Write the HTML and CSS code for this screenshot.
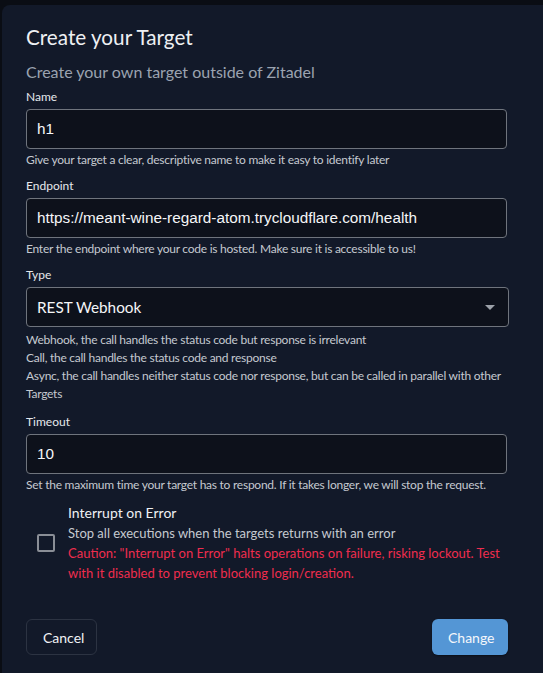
FILE: index.html
```html
<!DOCTYPE html>
<html lang="en">
<head>
<meta charset="utf-8">
<title>Create your Target</title>
<link rel="stylesheet" href="styles.css">
</head>
<body>
<div class="dialog">
  <h1 class="title">Create your Target</h1>
  <p class="subtitle">Create your own target outside of Zitadel</p>

  <div class="field">
    <label class="label">Name</label>
    <div class="input">h1</div>
    <p class="hint">Give your target a clear, descriptive name to make it easy to identify later</p>
  </div>

  <div class="field">
    <label class="label">Endpoint</label>
    <div class="input">https://meant-wine-regard-atom.trycloudflare.com/health</div>
    <p class="hint">Enter the endpoint where your code is hosted. Make sure it is accessible to us!</p>
  </div>

  <div class="field">
    <label class="label">Type</label>
    <div class="select">
      <span>REST Webhook</span>
      <span class="arrow"></span>
    </div>
    <p class="hint multi">Webhook, the call handles the status code but response is irrelevant<br>Call, the call handles the status code and response<br>Async, the call handles neither status code nor response, but can be called in parallel with other Targets</p>
  </div>

  <div class="field field-timeout">
    <label class="label">Timeout</label>
    <div class="input">10</div>
    <p class="hint">Set the maximum time your target has to respond. If it takes longer, we will stop the request.</p>
  </div>

  <div class="check-row">
    <div class="check-wrap"><span class="checkbox"></span></div>
    <div class="check-text">
      <div class="check-title">Interrupt on Error</div>
      <div class="check-desc">Stop all executions when the targets returns with an error</div>
      <div class="caution">Caution: "Interrupt on Error" halts operations on failure, risking lockout. Test with it disabled to prevent blocking login/creation.</div>
    </div>
  </div>

  <div class="actions">
    <button class="btn btn-cancel">Cancel</button>
    <button class="btn btn-primary">Change</button>
  </div>
</div>
</body>
</html>
```
FILE: styles.css
```css
html, body {
  margin: 0;
  padding: 0;
  background: #0a0d14;
  overflow: hidden;
}
body {
  font-family: Lato, "Liberation Sans", sans-serif;
  color: #e6e8ec;
  height: 673px;
}
.dialog {
  margin: 5px 0 0 2px;
  background: #121929;
  border-radius: 8px 0 0 0;
  padding: 20px 0 0 24px;
  width: 560px;
  height: 700px;
  box-sizing: border-box;
}
.title {
  margin: 0;
  font-size: 20.7px;
  font-weight: 400;
  line-height: 24px;
  color: #eef0f3;
}
.subtitle {
  margin: 13px 0 0;
  font-size: 16px;
  line-height: 20px;
  color: #9ba3b0;
}
.field {
  display: flex;
  flex-direction: column;
  width: 481px;
  margin-top: 10px;
}
.subtitle + .field { margin-top: 7px; }
.field-timeout { margin-top: 11px; }
.label {
  font-size: 12px;
  line-height: 16px;
  color: #e6e8ec;
  margin-bottom: 4px;
}
.input, .select {
  height: 40px;
  box-sizing: border-box;
  border: 1px solid #6f747d;
  border-radius: 4px;
  background: #0d111b;
  font-family: "Liberation Sans", Arial, sans-serif;
  font-size: 15.3px;
  color: #f5f6f8;
  padding: 0 10px;
  display: flex;
  align-items: center;
}
.select {
  font-family: Lato, sans-serif;
  justify-content: space-between;
  width: 483px;
  padding-right: 13px;
}
.arrow {
  width: 0;
  height: 0;
  border-left: 5px solid transparent;
  border-right: 5px solid transparent;
  border-top: 5px solid #9ca1a9;
}
.hint {
  margin: 3px 0 0;
  font-size: 12px;
  letter-spacing: -0.25px;
  line-height: 16px;
  color: #c5c9d0;
}
.hint.multi {
  line-height: 18px;
  margin-top: 4px;
}
.check-row {
  display: flex;
  align-items: center;
  margin-top: 10px;
}
.check-wrap {
  width: 42px;
  flex-shrink: 0;
  display: flex;
  padding-left: 11px;
  box-sizing: border-box;
}
.checkbox {
  width: 18px;
  height: 18px;
  box-sizing: border-box;
  border: 2px solid #8a8e96;
  border-radius: 2px;
}
.check-text {
  width: 445px;
  font-size: 14px;
  line-height: 20px;
}
.check-title { color: #eef0f3; }
.check-desc { color: #c5c9d0; font-size: 13px; }
.caution { color: #ef2d4e; font-size: 13px; }
.actions {
  display: flex;
  justify-content: space-between;
  width: 482px;
  margin-top: 36px;
}
.btn {
  font-family: Lato, sans-serif;
  font-size: 14px;
  height: 36px;
  border-radius: 6px;
  padding: 0 16px;
  cursor: pointer;
}
.btn-cancel {
  background: transparent;
  border: 1px solid #2c3342;
  color: #f0f2f5;
  width: 71px;
}
.btn-primary {
  background: #5496d5;
  border: none;
  color: #f4f7fb;
  width: 76px;
  box-shadow: 0 1px 2px rgba(0,0,0,0.4);
}
```
